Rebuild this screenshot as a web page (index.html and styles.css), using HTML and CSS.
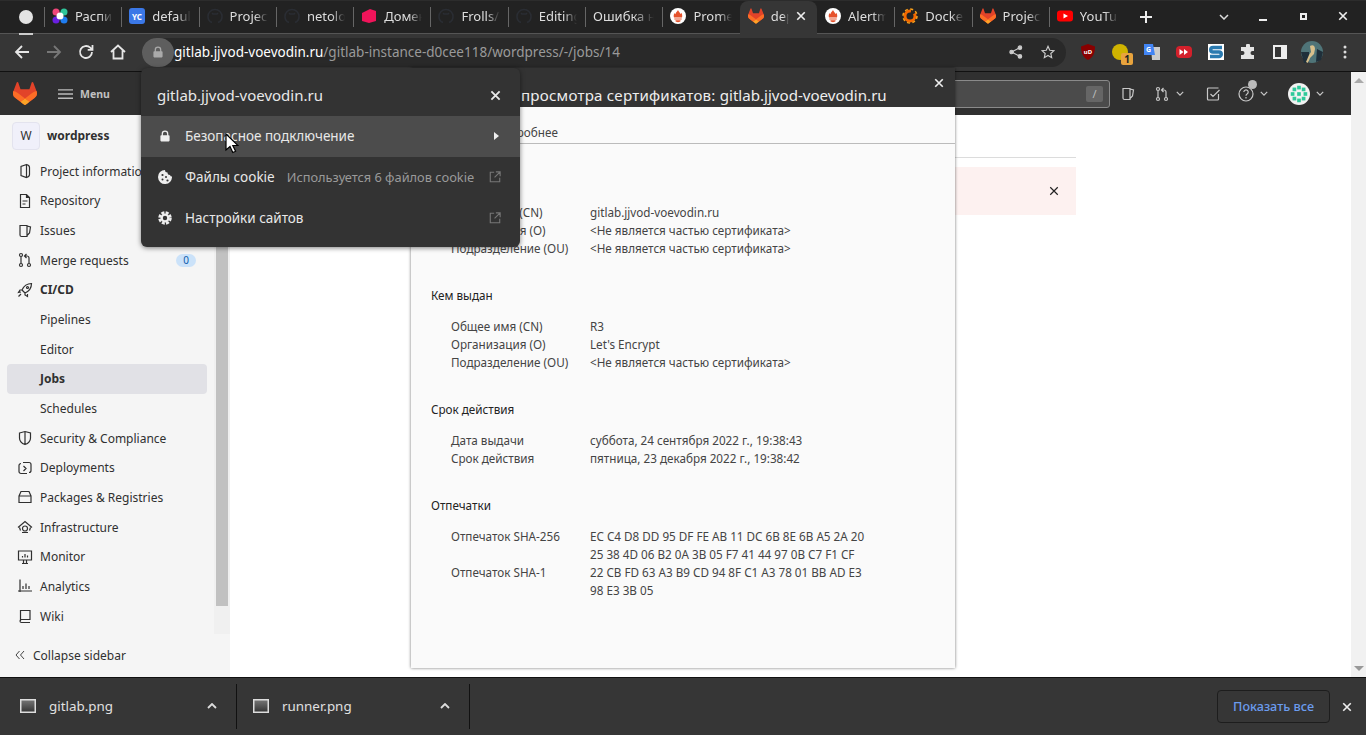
FILE: index.html
```html
<!DOCTYPE html>
<html lang="ru">
<head>
    <meta charset="UTF-8">
    <title>Jobs · wordpress</title>
    <link rel="stylesheet" href="styles.css">
</head>
<body>
    <svg class="defs" xmlns="http://www.w3.org/2000/svg">
        <symbol id="tanuki" viewBox="0 0 25 24">
            <path fill="#E24329" d="M24.507 9.5l-.034-.09L21.082.562a.896.896 0 00-1.694.091l-2.29 7.01H7.825L5.535.653a.898.898 0 00-1.694-.09L.451 9.411.416 9.5a6.297 6.297 0 002.09 7.278l.012.01.03.022 5.16 3.867 2.56 1.935 1.554 1.176a1.051 1.051 0 001.268 0l1.555-1.176 2.56-1.935 5.197-3.89.014-.01A6.297 6.297 0 0024.507 9.5z"/>
            <path fill="#FC6D26" d="M24.507 9.5l-.034-.09a11.44 11.44 0 00-4.56 2.051l-7.447 5.632 4.742 3.584 5.197-3.89.014-.01A6.297 6.297 0 0024.507 9.5z"/>
            <path fill="#FCA326" d="M7.707 20.677l2.56 1.935 1.555 1.176a1.051 1.051 0 001.268 0l1.555-1.176 2.56-1.935-4.743-3.584-4.755 3.584z"/>
            <path fill="#FC6D26" d="M5.01 11.461a11.43 11.43 0 00-4.56-2.05L.416 9.5a6.297 6.297 0 002.09 7.278l.012.01.03.022 5.16 3.867 4.745-3.584-7.444-5.632z"/>
        </symbol>
        <symbol id="octo" viewBox="0 0 16 16">
            <path fill="none" stroke="#2a2d33" stroke-width="1.6" d="M5 14.500C2.500 13.500 1 11 1 8.500a7 7 0 0 1 14 0c0 2.500-1.500 5-4 6M5 5l1 1h4l1-1"/>
        </symbol>
        <symbol id="prom" viewBox="0 0 16 16">
            <circle cx="8" cy="8" r="8" fill="#fff"/>
            <path fill="#e6522c" d="M8 2c.4 1.600 2 2.400 2.600 4 .5-.3.7-.7.8-1.200.8 1.300 1.100 3 .6 4.700H4c-.6-1.700-.3-3.300.7-4.500.1.500.3.900.7 1.200C5.500 4.400 7.500 3.700 8 2zM4.300 10.500h7.400v1.100H4.300zM5.500 12.300h5V13c0 .6-1.200 1.200-2.500 1.200S5.500 13.600 5.500 13z"/>
        </symbol>
        <symbol id="close" viewBox="0 0 12 12">
            <path fill="none" stroke="currentColor" stroke-width="2" d="M1.500 1.500l9 9M10.500 1.500l-9 9"/>
        </symbol>
        <symbol id="chev" viewBox="0 0 10 6">
            <path fill="none" stroke="currentColor" stroke-width="1.500" d="M1 1l4 4 4-4"/>
        </symbol>
        <symbol id="chev-up" viewBox="0 0 10 6">
            <path fill="none" stroke="currentColor" stroke-width="1.800" d="M1 5l4-4 4 4"/>
        </symbol>
        <symbol id="lock" viewBox="0 0 12 14">
            <path fill="currentColor" d="M2 6V4.500a4 4 0 0 1 8 0V6h.500c.6 0 1 .4 1 1v5.500c0 .6-.4 1-1 1h-9c-.6 0-1-.4-1-1V7c0-.6.4-1 1-1zm1.500 0h5V4.500a2.500 2.500 0 0 0-5 0z"/>
        </symbol>
        <symbol id="ext-link" viewBox="0 0 14 14">
            <path fill="none" stroke="currentColor" stroke-width="1.300" d="M6 1.500H1.500v11h11V8M8 1h5v5M13 1L6.500 7.500"/>
        </symbol>
        <linearGradient id="thumb-fill" x1="0" y1="0" x2="0" y2="1">
            <stop offset="0" stop-color="#777"/>
            <stop offset="1" stop-color="#333"/>
        </linearGradient>
        <symbol id="file-thumb" viewBox="0 0 16 14">
            <rect x=".75" y=".75" width="14.500" height="12.500" fill="url(#thumb-fill)" stroke="#ddd" stroke-width="1.500"/>
        </symbol>
        <g id="ic-project"><path d="M9.500 1.500L4 3.500v9l5.500 2c2-.5 3-1.500 3-3v-7c0-1.500-1-2.500-3-3zM9.500 1.500v13"/></g>
        <g id="ic-repo"><path d="M3.500 1.500h6l3 3v10h-9zM9.500 1.500v3h3M5.500 8h5M5.500 11h3"/></g>
        <g id="ic-issue"><path d="M3 2.500h7v11H4.500A1.500 1.500 0 0 1 3 12zM10 3l3.500 1-1 6-2.500 2.500"/></g>
        <g id="ic-merge"><circle cx="4" cy="3" r="1.500"/><circle cx="4" cy="13" r="1.500"/><circle cx="12" cy="13" r="1.500"/><path d="M4 4.500v7M12 11.500V6a2 2 0 0 0-2-2H8M9.500 2l-2 2 2 2"/></g>
        <g id="ic-rocket"><path d="M14.500 1.500c-4 0-7.500 2-9.500 6.500l3 3c4.500-2 6.500-5.500 6.500-9.500zM5 8H3l-1.500 2.500L4 10M8 11v2l2.500 1.500L10.500 12M4 12l-2.500 2.500"/><circle cx="10.500" cy="5.500" r="1"/></g>
        <g id="ic-shield"><path d="M2.500 3L8 1.500 13.500 3v5c0 3-2.500 5.500-5.500 6.500C5 13.500 2.500 11 2.500 8zM8 1.500v13"/></g>
        <g id="ic-deploy"><path d="M6 2.500h6a2 2 0 0 1 2 2v6a2 2 0 0 1-2 2M10 13.500H4a2 2 0 0 1-2-2v-6a2 2 0 0 1 2-2M6.500 6L9 8.500 6.500 11"/></g>
        <g id="ic-package"><path d="M2 7l2-4.500h8L14 7v6.500H2zM2 7h12"/></g>
        <g id="ic-infra"><path d="M1 8.500L8 2.500l7 6M3.500 11.500L2.500 8.500M12.500 11.500l1-3M5 13.500h6"/><circle cx="8" cy="9.500" r="2.500"/></g>
        <g id="ic-monitor"><path d="M1.500 2h13v9h-13zM5 14.500h6M6.500 11v3.500M9.500 11v3.500M5.500 8.500V7M8 8.500V5M10.500 8.500V6.500"/></g>
        <g id="ic-analytics"><path d="M3 1.500v12.500M1 13h14M6 11V8M9 11V5.500M12 11V8"/></g>
        <g id="ic-wiki"><path d="M3.500 13V2.500H13v9H4.500a1.500 1.500 0 0 0 0 3H13"/></g>
    </svg>

    <div class="tabstrip">
        <div class="tab-pin"><span class="pin-dot"></span></div>
        <div class="tab">
            <svg class="fav" viewBox="0 0 16 16"><circle cx="4" cy="4" r="3.500" fill="#f0457a"/><circle cx="12" cy="4" r="3.500" fill="#2fc59a"/><circle cx="4" cy="12" r="3.500" fill="#6a1fe0"/><circle cx="12" cy="12" r="3.500" fill="#1f7df0"/><circle cx="8" cy="8" r="3.500" fill="#fff"/></svg>
            <span class="tab-title">Расписание</span>
        </div>
        <div class="tab">
            <svg class="fav" viewBox="0 0 16 16"><rect width="16" height="16" rx="3" fill="#3b78e7"/><text x="8" y="11.500" class="fav-yc">YC</text></svg>
            <span class="tab-title">default</span>
        </div>
        <div class="tab"><svg class="fav"><use href="#octo"/></svg><span class="tab-title">Project</span></div>
        <div class="tab"><svg class="fav"><use href="#octo"/></svg><span class="tab-title">netology</span></div>
        <div class="tab">
            <svg class="fav" viewBox="0 0 16 16"><path fill="#f0145a" d="M1 5l8-4 6 2v10l-7 2-7-2z"/></svg>
            <span class="tab-title">Домены</span>
        </div>
        <div class="tab"><svg class="fav"><use href="#octo"/></svg><span class="tab-title">Frolls/devops</span></div>
        <div class="tab"><svg class="fav"><use href="#octo"/></svg><span class="tab-title">Editing</span></div>
        <div class="tab tab-nofav"><span class="tab-title">Ошибка нет</span></div>
        <div class="tab"><svg class="fav"><use href="#prom"/></svg><span class="tab-title">Prometheus</span></div>
        <div class="tab tab-active">
            <svg class="fav"><use href="#tanuki"/></svg>
            <span class="tab-title">deploy</span>
            <svg class="tab-close"><use href="#close"/></svg>
        </div>
        <div class="tab"><svg class="fav"><use href="#prom"/></svg><span class="tab-title">Alertmanager</span></div>
        <div class="tab">
            <svg class="fav" viewBox="0 0 16 16"><circle cx="8" cy="8" r="5" fill="none" stroke="#f46800" stroke-width="3" stroke-dasharray="24 4"/><circle cx="8" cy="8" r="7" fill="none" stroke="#f9a11b" stroke-width="1.500" stroke-dasharray="3 2.500"/></svg>
            <span class="tab-title">Docker</span>
        </div>
        <div class="tab"><svg class="fav"><use href="#tanuki"/></svg><span class="tab-title">Project</span></div>
        <div class="tab">
            <svg class="fav" viewBox="0 0 16 16"><rect y="2.500" width="16" height="11" rx="3" fill="#f00"/><path fill="#fff" d="M6.500 5.500L11 8l-4.500 2.500z"/></svg>
            <span class="tab-title">YouTube</span>
        </div>
        <svg class="new-tab" viewBox="0 0 12 12"><path d="M6 0v12M0 6h12"/></svg>
        <svg class="tabs-menu"><use href="#chev"/></svg>
        <div class="win-btn"><span class="win-min"></span></div>
        <div class="win-btn"><span class="win-max"></span></div>
        <div class="win-btn"><svg class="win-close"><use href="#close"/></svg></div>
    </div>

    <div class="toolbar">
        <svg class="nav-btn" viewBox="0 0 16 16"><path d="M15 8H2M8 2L2 8l6 6"/></svg>
        <svg class="nav-btn nav-off" viewBox="0 0 16 16"><path d="M1 8h13M8 2l6 6-6 6"/></svg>
        <svg class="nav-btn" viewBox="0 0 16 16"><path d="M14 8a6 6 0 1 1-1.800-4.300L14 5.500M14.500 1v4.800H9.700"/></svg>
        <svg class="nav-btn" viewBox="0 0 16 16"><path d="M1 8l7-6.500L15 8M3.500 6.500V14.500h9V6.500"/></svg>
        <div class="omnibox">
            <div class="lock-chip"><svg class="lock-icon"><use href="#lock"/></svg></div>
            <div class="url"><span class="url-host">gitlab.jjvod-voevodin.ru</span>/gitlab-instance-d0cee118/wordpress/-/jobs/14</div>
            <svg class="omni-icon" viewBox="0 0 16 16"><circle cx="3" cy="8" r="2" fill="#ccc"/><circle cx="12.500" cy="3" r="2" fill="#ccc"/><circle cx="12.500" cy="13" r="2" fill="#ccc"/><path d="M3 8l9.500-5M3 8l9.500 5"/></svg>
            <svg class="omni-icon omni-star" viewBox="0 0 16 16"><path d="M8 1.500l2 4.500 4.800.5-3.600 3.200 1 4.800L8 12l-4.200 2.500 1-4.800L1.200 6.500 6 6z"/></svg>
        </div>
        <div class="extensions">
            <svg class="ext" viewBox="0 0 16 16"><path fill="#800" d="M8 0l7 2.500C15 9 13 13.500 8 16 3 13.500 1 9 1 2.500z"/><text x="8" y="10" class="ext-ub">uD</text></svg>
            <div class="ext ext-yellow"><span class="ext-badge">1</span></div>
            <svg class="ext" viewBox="0 0 16 16"><path fill="#ccc" d="M7 3h9v13H8z"/><path fill="#4285f4" d="M0 0h9l2 11H0z"/><text x="4.500" y="7.500" class="ext-g">G</text></svg>
            <svg class="ext" viewBox="0 0 16 16"><rect y="2" width="16" height="12" rx="4" fill="#d3202b"/><path fill="#fff" d="M3.500 5l4 3-4 3zM8 5l4 3-4 3z"/></svg>
            <svg class="ext" viewBox="0 0 16 16"><rect width="16" height="16" fill="#fff"/><path fill="none" stroke="#2a7ab0" stroke-width="3.500" d="M14 3.500H5a2 2 0 0 0 0 4.500h6a2 2 0 0 1 0 4.500H2"/></svg>
            <svg class="ext" viewBox="0 0 16 16"><path fill="#e4e4e4" d="M6 1.500a2 2 0 0 1 4 0V3h4v4h-1.500a2 2 0 0 0 0 4H14v4H1v-4h1.500a2 2 0 0 0 0-4H1V3h5z"/></svg>
            <svg class="ext" viewBox="0 0 16 16"><path fill="none" stroke="#eee" stroke-width="2" d="M2 2h12v12H2z"/><path fill="#eee" d="M9 2h5v12H9z"/></svg>
            <svg class="ext ext-avatar" viewBox="0 0 22 22"><circle cx="11" cy="11" r="11" fill="#4f7478"/><path fill="#1f2f3a" d="M0 11h8v11H3zM16 8l6 3-2 8-5 2z"/><path fill="#d8c08c" d="M9 5c3-2 5 0 5 3l-1 5-4 4-2 5-2-1 3-7 2-3z"/></svg>
        </div>
        <svg class="kebab" viewBox="0 0 4 14"><circle cx="2" cy="2" r="1.500"/><circle cx="2" cy="7" r="1.500"/><circle cx="2" cy="12" r="1.500"/></svg>
    </div>

    <div class="viewport">
        <div class="gl-app">
            <div class="gl-header">
                <svg class="gl-logo"><use href="#tanuki"/></svg>
                <svg class="gl-burger" viewBox="0 0 16 12"><path d="M0 1.500h16M0 6h16M0 10.500h16"/></svg>
                <span class="gl-menu">Menu</span>
                <div class="gl-search"><span class="slash">/</span></div>
                <svg class="gl-ic gl-issue" viewBox="0 0 16 16"><use href="#ic-issue"/></svg>
                <svg class="gl-ic gl-mr" viewBox="0 0 16 16"><use href="#ic-merge"/></svg>
                <svg class="gl-chev"><use href="#chev"/></svg>
                <svg class="gl-ic gl-todo" viewBox="0 0 16 16"><path d="M13.500 8v5a1 1 0 0 1-1 1h-9a1 1 0 0 1-1-1V3a1 1 0 0 1 1-1h10M5.500 8l2.500 2.500L14.500 4"/></svg>
                <div class="gl-help">
                    <svg class="gl-ic" viewBox="0 0 16 16"><circle cx="8" cy="8" r="7"/><path d="M5.800 6a2.200 2.200 0 1 1 3.300 2c-.7.400-1.100.8-1.100 1.700M8 11v1.500"/></svg>
                    <span class="help-dot"></span>
                </div>
                <svg class="gl-chev"><use href="#chev"/></svg>
                <svg class="gl-user" viewBox="0 0 24 24">
                    <circle cx="12" cy="12" r="12" fill="#f2f2f2"/>
                    <g fill="#2ec99a"><rect x="5" y="5" width="4" height="4"/><rect x="10" y="3" width="4" height="4"/><rect x="15" y="5" width="4" height="4"/><rect x="3" y="10" width="4" height="4"/><rect x="10" y="10" width="4" height="4"/><rect x="17" y="10" width="4" height="4"/><rect x="5" y="15" width="4" height="4"/><rect x="10" y="17" width="4" height="4"/><rect x="15" y="15" width="4" height="4"/></g>
                </svg>
                <svg class="gl-chev"><use href="#chev"/></svg>
            </div>

            <div class="page">
                <aside class="sidebar">
                    <div class="side-scroll">
                        <nav class="side-nav">
                            <div class="side-context"><span class="avatar-w">W</span><span>wordpress</span></div>
                            <a class="side-item"><svg viewBox="0 0 16 16"><use href="#ic-project"/></svg>Project information</a>
                            <a class="side-item"><svg viewBox="0 0 16 16"><use href="#ic-repo"/></svg>Repository</a>
                            <a class="side-item"><svg viewBox="0 0 16 16"><use href="#ic-issue"/></svg>Issues</a>
                            <a class="side-item"><svg viewBox="0 0 16 16"><use href="#ic-merge"/></svg>Merge requests<span class="count">0</span></a>
                            <a class="side-item side-strong"><svg viewBox="0 0 16 16"><use href="#ic-rocket"/></svg>CI/CD</a>
                            <a class="side-item side-sub">Pipelines</a>
                            <a class="side-item side-sub">Editor</a>
                            <a class="side-item side-sub side-active">Jobs</a>
                            <a class="side-item side-sub">Schedules</a>
                            <a class="side-item"><svg viewBox="0 0 16 16"><use href="#ic-shield"/></svg>Security &amp; Compliance</a>
                            <a class="side-item"><svg viewBox="0 0 16 16"><use href="#ic-deploy"/></svg>Deployments</a>
                            <a class="side-item"><svg viewBox="0 0 16 16"><use href="#ic-package"/></svg>Packages &amp; Registries</a>
                            <a class="side-item"><svg viewBox="0 0 16 16"><use href="#ic-infra"/></svg>Infrastructure</a>
                            <a class="side-item"><svg viewBox="0 0 16 16"><use href="#ic-monitor"/></svg>Monitor</a>
                            <a class="side-item"><svg viewBox="0 0 16 16"><use href="#ic-analytics"/></svg>Analytics</a>
                            <a class="side-item"><svg viewBox="0 0 16 16"><use href="#ic-wiki"/></svg>Wiki</a>
                        </nav>
                        <div class="side-track"><div class="side-thumb"></div></div>
                    </div>
                    <div class="side-collapse">
                        <svg viewBox="0 0 10 10"><path d="M4.500 1L1 5l3.500 4M9 1L5.500 5 9 9"/></svg>
                        Collapse sidebar
                    </div>
                </aside>
                <main class="content">
                    <div class="breadcrumbs"></div>
                    <div class="alert"><svg class="alert-close" viewBox="0 0 12 12"><path d="M1.500 1.500l9 9M10.500 1.500l-9 9"/></svg></div>
                </main>
            </div>
        </div>
        <div class="page-scroll">
            <span class="arrow-up"></span>
            <span class="arrow-down"></span>
        </div>
    </div>

    <div class="downloads">
        <div class="dl-item">
            <svg class="dl-thumb"><use href="#file-thumb"/></svg>
            <span class="dl-name">gitlab.png</span>
            <svg class="dl-chev"><use href="#chev-up"/></svg>
        </div>
        <div class="dl-item">
            <svg class="dl-thumb"><use href="#file-thumb"/></svg>
            <span class="dl-name">runner.png</span>
            <svg class="dl-chev"><use href="#chev-up"/></svg>
        </div>
        <button class="dl-all">Показать все</button>
        <svg class="dl-close"><use href="#close"/></svg>
    </div>

    <!-- окно просмотра сертификата -->
    <section class="cert">
        <header class="cert-title">
            <span><span class="cert-title-ru">Средство просмотра сертификатов: </span>gitlab.jjvod-voevodin.ru</span>
            <svg class="cert-close"><use href="#close"/></svg>
        </header>
        <div class="cert-tabs"><span>Общее</span><span>Подробнее</span></div>
        <div class="cert-body">
            <h4>Кому выдан</h4>
            <dl>
                <dt>Общее имя (CN)</dt><dd>gitlab.jjvod-voevodin.ru</dd>
                <dt>Организация (O)</dt><dd>&lt;Не является частью сертификата&gt;</dd>
                <dt>Подразделение (OU)</dt><dd>&lt;Не является частью сертификата&gt;</dd>
            </dl>
            <h4>Кем выдан</h4>
            <dl>
                <dt>Общее имя (CN)</dt><dd>R3</dd>
                <dt>Организация (O)</dt><dd>Let's Encrypt</dd>
                <dt>Подразделение (OU)</dt><dd>&lt;Не является частью сертификата&gt;</dd>
            </dl>
            <h4>Срок действия</h4>
            <dl>
                <dt>Дата выдачи</dt><dd>суббота, 24 сентября 2022 г., 19:38:43</dd>
                <dt>Срок действия</dt><dd>пятница, 23 декабря 2022 г., 19:38:42</dd>
            </dl>
            <h4>Отпечатки</h4>
            <dl>
                <dt>Отпечаток SHA-256</dt><dd>EC C4 D8 DD 95 DF FE AB 11 DC 6B 8E 6B A5 2A 20<br>25 38 4D 06 B2 0A 3B 05 F7 41 44 97 0B C7 F1 CF</dd>
                <dt>Отпечаток SHA-1</dt><dd>22 CB FD 63 A3 B9 CD 94 8F C1 A3 78 01 BB AD E3<br>98 E3 3B 05</dd>
            </dl>
        </div>
    </section>

    <!-- всплывающее окно сайта -->
    <section class="site-popup">
        <div class="popup-head">
            <span>gitlab.jjvod-voevodin.ru</span>
            <svg class="popup-x"><use href="#close"/></svg>
        </div>
        <div class="popup-row popup-row-hover">
            <svg class="popup-ic popup-lock"><use href="#lock"/></svg>
            <span class="popup-label">Безопасное подключение</span>
            <span class="popup-arrow"></span>
        </div>
        <div class="popup-row">
            <svg class="popup-ic" viewBox="0 0 14 14"><path fill="#eee" d="M7 0a2.500 2.500 0 0 0 2.500 2.500A2.500 2.500 0 0 0 12 5a2 2 0 0 0 2 1.500A7 7 0 1 1 7 0z"/><g fill="#333"><circle cx="4.500" cy="5" r="1.100"/><circle cx="8" cy="7" r="1"/><circle cx="4.500" cy="9.500" r="1"/><circle cx="9.500" cy="10.500" r="1.100"/></g></svg>
            <span class="popup-label">Файлы cookie</span>
            <span class="popup-sub">Используется 6 файлов cookie</span>
            <svg class="popup-ext"><use href="#ext-link"/></svg>
        </div>
        <div class="popup-row">
            <svg class="popup-ic" viewBox="0 0 14 14"><circle cx="7" cy="7" r="5.500" fill="none" stroke="#eee" stroke-width="2.500" stroke-dasharray="3 1.320"/><circle cx="7" cy="7" r="3.400" fill="none" stroke="#eee" stroke-width="2.400"/></svg>
            <span class="popup-label">Настройки сайтов</span>
            <svg class="popup-ext"><use href="#ext-link"/></svg>
        </div>
    </section>

    <svg class="cursor" viewBox="0 0 14 22"><path fill="#fff" stroke="#000" stroke-width="1.200" d="M1 1v16l4-3.500 2.800 6 2.800-1.200-2.800-5.800H13z"/></svg>
</body>
</html>
```

FILE: styles.css
```css
* {
    box-sizing: border-box;
}
body {
    margin: 0;
    width: 1366px;
    height: 735px;
    overflow: hidden;
    display: flex;
    flex-direction: column;
    position: relative;
    font-family: "Noto Sans", "Open Sans", sans-serif;
    font-size: 12px;
    background: #fff;
}
.defs {
    position: absolute;
    width: 0;
    height: 0;
}

/* Вкладки браузера */
.tabstrip {
    height: 34px;
    flex: none;
    display: flex;
    align-items: flex-end;
    background: #222;
    border-top: 1px solid #2c2c2c;
    border-bottom: 1px solid #555;
    padding-left: 7px;
}
.tab-pin {
    width: 37px;
    height: 32px;
    flex: none;
    display: flex;
    align-items: center;
    justify-content: center;
    position: relative;
}
.tab-pin::after {
    content: "";
    position: absolute;
    left: 12px;
    right: 11px;
    bottom: -2px;
    height: 2px;
    background: #ccc;
}
.pin-dot {
    width: 14px;
    height: 14px;
    border-radius: 50%;
    background: #e3e3e3;
}
.tab {
    width: 77.3px;
    height: 32px;
    flex: none;
    display: flex;
    align-items: center;
    gap: 7px;
    padding: 0 8px 2px 8px;
    color: #dedede;
    font-size: 13px;
    position: relative;
}
.tab::before {
    content: "";
    position: absolute;
    left: 0;
    top: 6px;
    height: 20px;
    width: 1px;
    background: #666;
}
.tab-active {
    background: #363636;
    border-radius: 8px 8px 0 0;
    height: 33px;
    margin-bottom: -1px;
    padding: 0 11px 3px 8px;
}
.tab-active::before,
.tab-active + .tab::before {
    display: none;
}
.fav {
    width: 16px;
    height: 16px;
    flex: none;
}
.fav-yc {
    fill: #fff;
    font-size: 8px;
    font-weight: 700;
    text-anchor: middle;
}
.tab-title {
    flex: 1;
    min-width: 0;
    overflow: hidden;
    white-space: nowrap;
    -webkit-mask-image: linear-gradient(to right, #000 65%, transparent);
    mask-image: linear-gradient(to right, #000 65%, transparent);
}
.tab-close {
    width: 10px;
    height: 10px;
    flex: none;
    color: #eee;
}
.new-tab {
    width: 12px;
    height: 12px;
    flex: none;
    margin: 0 0 10px 14px;
    stroke: #eee;
    stroke-width: 2;
}
.tabs-menu {
    width: 10px;
    height: 6px;
    flex: none;
    margin: 0 0 13px 67px;
    color: #ddd;
}
.win-btn {
    width: 40px;
    height: 32px;
    flex: none;
    display: flex;
    align-items: center;
    justify-content: center;
    color: #eee;
    padding-bottom: 2px;
}
.win-btn:nth-last-child(3) {
    margin-left: 14px;
}
.win-min {
    width: 8px;
    height: 2px;
    margin-top: 7px;
    background: #eee;
}
.win-max {
    width: 7px;
    height: 7px;
    border: 2px solid #eee;
}
.win-close {
    width: 10px;
    height: 10px;
}

/* Панель адреса */
.toolbar {
    height: 38px;
    flex: none;
    display: flex;
    align-items: center;
    background: #363636;
    border-bottom: 1px solid #111;
    padding: 0 0 1px 14px;
}
.nav-btn {
    width: 16px;
    height: 16px;
    flex: none;
    margin-right: 16px;
    fill: none;
    stroke: #e6e6e6;
    stroke-width: 1.8;
}
.nav-off {
    stroke: #777;
}
.omnibox {
    width: 924px;
    height: 29px;
    flex: none;
    display: flex;
    align-items: center;
    background: #292929;
    border-radius: 15px;
    padding-right: 11px;
}
.lock-chip {
    width: 32px;
    height: 29px;
    flex: none;
    display: flex;
    align-items: center;
    justify-content: center;
    background: #5e5e5e;
    border-radius: 15px;
}
.lock-icon {
    width: 10px;
    height: 12px;
    color: #aaa;
}
.url {
    flex: 1;
    font-size: 13.5px;
    color: #9a9a9a;
    white-space: nowrap;
}
.url-host {
    color: #fff;
}
.omni-icon {
    width: 14px;
    height: 14px;
    flex: none;
    margin-left: 18px;
    fill: none;
    stroke: #ccc;
    stroke-width: 1.3;
}
.extensions {
    display: flex;
    align-items: center;
    gap: 16px;
    margin-left: 14px;
}
.ext {
    width: 16px;
    height: 16px;
    flex: none;
}
.ext-ub {
    fill: #fff;
    font-size: 6px;
    font-weight: 700;
    text-anchor: middle;
}
.ext-g {
    fill: #fff;
    font-size: 7px;
    font-weight: 700;
    text-anchor: middle;
}
.ext-yellow {
    background: #cfb300;
    border-radius: 50%;
    position: relative;
}
.ext-badge {
    position: absolute;
    left: 9px;
    top: 9px;
    width: 12px;
    height: 12px;
    border-radius: 2px;
    background: #e8a33d;
    color: #222;
    font-size: 10px;
    font-weight: 700;
    line-height: 12px;
    text-align: center;
}
.ext-avatar {
    width: 22px;
    height: 22px;
    margin: 0 -3px;
}
.kebab {
    width: 4px;
    height: 14px;
    flex: none;
    margin-left: 23px;
    fill: #ddd;
}

/* Шапка GitLab */
.viewport {
    flex: 1;
    min-height: 0;
    display: flex;
}
.gl-app {
    flex: 1;
    min-width: 0;
    display: flex;
    flex-direction: column;
}
.gl-header {
    height: 43px;
    flex: none;
    display: flex;
    align-items: center;
    background: #303030;
    padding: 0 27px 0 13px;
    color: #c8c8c8;
}
.gl-logo {
    width: 24px;
    height: 23px;
    flex: none;
}
.gl-burger {
    width: 15px;
    height: 12px;
    flex: none;
    margin-left: 21px;
    fill: none;
    stroke: #bbb;
    stroke-width: 1.4;
}
.gl-menu {
    margin-left: 7px;
    font-size: 10.5px;
    font-weight: 700;
    color: #c0c0c0;
}
.gl-search {
    width: 330px;
    height: 28px;
    flex: none;
    margin-left: auto;
    display: flex;
    align-items: center;
    justify-content: flex-end;
    background: #4b4b4b;
    border: 1px solid #8a8a8a;
    border-radius: 3px;
    padding-right: 6px;
}
.slash {
    width: 17px;
    height: 16px;
    background: #666;
    border-radius: 2px;
    color: #bbb;
    font-size: 11px;
    line-height: 16px;
    text-align: center;
}
.gl-ic {
    width: 16px;
    height: 16px;
    flex: none;
    fill: none;
    stroke: #c8c8c8;
    stroke-width: 1.2;
}
.gl-issue {
    margin-left: 10px;
}
.gl-mr {
    margin-left: 18px;
}
.gl-chev {
    width: 8px;
    height: 5px;
    flex: none;
    margin-left: 6px;
}
.gl-todo {
    margin-left: 21px;
}
.gl-help {
    margin-left: 17px;
    width: 16px;
    height: 16px;
    position: relative;
}
.help-dot {
    position: absolute;
    left: 10px;
    top: -6px;
    width: 9px;
    height: 9px;
    border-radius: 50%;
    background: #bbb;
}
.gl-user {
    width: 22px;
    height: 22px;
    flex: none;
    margin-left: 20px;
}

/* Страница */
.page {
    flex: 1;
    min-height: 0;
    display: flex;
}
.sidebar {
    width: 230px;
    flex: none;
    display: flex;
    flex-direction: column;
    background: #f5f5f5;
    color: #303030;
}
.side-scroll {
    flex: 1;
    min-height: 0;
    display: flex;
}
.side-nav {
    flex: 1;
    min-width: 0;
}
.side-context {
    height: 41.4px;
    display: flex;
    align-items: center;
    gap: 7px;
    padding-left: 12px;
    font-weight: 700;
    font-size: 12px;
}
.avatar-w {
    width: 28px;
    height: 28px;
    display: flex;
    align-items: center;
    justify-content: center;
    background: #f0f0fa;
    border: 1px solid #e3e3ee;
    border-radius: 4px;
    font-weight: 400;
    font-size: 12px;
}
.side-item {
    height: 29.67px;
    display: flex;
    align-items: center;
    padding-left: 17px;
    white-space: nowrap;
    overflow: hidden;
    font-size: 12px;
}
.side-item svg {
    width: 16px;
    height: 16px;
    flex: none;
    margin-right: 7px;
    fill: none;
    stroke: #303030;
    stroke-width: 1.2;
}
.side-strong {
    font-weight: 700;
}
.side-sub {
    padding-left: 40px;
}
.side-active {
    margin: 0 7px;
    padding-left: 33px;
    background: #e1e1e6;
    border-radius: 4px;
    font-weight: 700;
}
.count {
    margin-left: auto;
    margin-right: 18px;
    width: 20px;
    height: 13px;
    border-radius: 7px;
    background: #cbe2f9;
    color: #0b5cad;
    font-size: 10px;
    line-height: 13px;
    text-align: center;
}
.side-track {
    width: 16px;
    flex: none;
    padding: 0 2px;
    background: #f0f0f0;
}
.side-thumb {
    height: 491px;
    background: #c1c1c1;
}
.side-collapse {
    height: 43px;
    flex: none;
    display: flex;
    align-items: center;
    padding: 0 0 1px 15px;
    font-size: 12px;
}
.side-collapse svg {
    width: 10px;
    height: 10px;
    margin-right: 8px;
    fill: none;
    stroke: #444;
    stroke-width: 1;
}
.content {
    flex: 1;
    min-width: 0;
    padding: 0 275px 0 16px;
    background: #fff;
}
.breadcrumbs {
    height: 43px;
    border-bottom: 1px solid #dcdcdc;
}
.alert {
    height: 48px;
    margin-top: 9px;
    display: flex;
    align-items: center;
    justify-content: flex-end;
    padding-right: 17px;
    background: #fdf1f0;
}
.alert-close {
    width: 10px;
    height: 10px;
    fill: none;
    stroke: #222;
    stroke-width: 1.4;
}
.page-scroll {
    width: 15px;
    flex: none;
    display: flex;
    flex-direction: column;
    justify-content: space-between;
    align-items: center;
    padding: 6px 0;
    background: #f1f1f1;
}
.arrow-up {
    border: 5px solid transparent;
    border-top: 0;
    border-bottom: 5px solid #aaa;
}
.arrow-down {
    border: 5px solid transparent;
    border-bottom: 0;
    border-top: 5px solid #999;
}

/* Загрузки */
.downloads {
    height: 58px;
    flex: none;
    display: flex;
    align-items: center;
    background: #363636;
    border-top: 1px solid #111;
    color: #e0e0e0;
    padding-right: 14px;
}
.dl-item {
    width: 233px;
    height: 45px;
    flex: none;
    display: flex;
    align-items: center;
    padding: 0 0 1px 16px;
    border-right: 1px solid #111;
}
.dl-item:first-child {
    width: 237px;
    padding-left: 20px;
}
.dl-thumb {
    width: 16px;
    height: 14px;
    flex: none;
}
.dl-name {
    flex: 1;
    margin-left: 13px;
    font-size: 13.4px;
}
.dl-chev {
    width: 10px;
    height: 6px;
    flex: none;
    margin-right: 19px;
    color: #ddd;
}
.dl-all {
    width: 113px;
    height: 33px;
    margin-left: auto;
    background: none;
    border: 1px solid #1d1d1d;
    border-radius: 4px;
    color: #6b9cee;
    font: 500 12.6px "Noto Sans", sans-serif;
}
.dl-close {
    width: 10px;
    height: 10px;
    margin-left: 12px;
    color: #eee;
}

/* Сертификат */
.cert {
    position: absolute;
    left: 411px;
    top: 68px;
    width: 544px;
    height: 600px;
    background: #fafafa;
    box-shadow: 0 0 3px rgba(0, 0, 0, 0.55);
    color: #444;
    font-size: 11.7px;
}
.cert-title {
    height: 39px;
    display: flex;
    align-items: flex-end;
    background: #333;
    color: #eee;
    font-size: 15.1px;
    padding: 0 11px 2px 36px;
    white-space: nowrap;
    position: relative;
}
.cert-title-ru {
    letter-spacing: 0.22px;
}
.cert-close {
    position: absolute;
    right: 11px;
    top: 10px;
    width: 10px;
    height: 10px;
    color: #eee;
}
.cert-tabs {
    height: 37px;
    display: flex;
    align-items: flex-end;
    gap: 24px;
    padding: 0 0 3px 20px;
    border-bottom: 1px solid #bbb;
}
.cert-body {
    padding: 28px 20px 0;
    line-height: 18px;
}
.cert-body h4 {
    margin: 0 0 13px;
    font-size: 11.7px;
    font-weight: 400;
    color: #222;
}
.cert-body dl {
    margin: 0 0 29px 20px;
    display: grid;
    grid-template-columns: 139px 1fr;
}
.cert-body dd {
    margin: 0;
}

/* Попап сайта */
.site-popup {
    position: absolute;
    left: 141px;
    top: 68px;
    width: 379px;
    height: 179px;
    background: #333;
    border-radius: 6px;
    box-shadow: 0 1px 5px rgba(0, 0, 0, 0.5);
    color: #e8e8e8;
    font-size: 13.5px;
}
.popup-head {
    height: 48px;
    display: flex;
    align-items: center;
    justify-content: space-between;
    padding: 6px 19px 0 16px;
    font-size: 15px;
}
.popup-x {
    width: 11px;
    height: 11px;
}
.popup-row {
    height: 41px;
    display: flex;
    align-items: center;
    padding: 0 0 2px 17px;
    position: relative;
}
.popup-row-hover {
    background: #4c4c4c;
}
.popup-ic {
    width: 14px;
    height: 14px;
    flex: none;
    margin-right: 13px;
    color: #eee;
}
.popup-lock {
    width: 10px;
    height: 12px;
    margin: 0 15px 0 2px;
}
.popup-sub {
    margin-left: 12px;
    color: #9a9a9a;
    font-size: 12.8px;
}
.popup-arrow {
    position: absolute;
    right: 21px;
    border: 4px solid transparent;
    border-right: 0;
    border-left: 5px solid #eee;
}
.popup-ext {
    position: absolute;
    right: 19px;
    width: 12px;
    height: 12px;
    color: #777;
}
.cursor {
    position: absolute;
    left: 225px;
    top: 133px;
    width: 14px;
    height: 22px;
}
```
